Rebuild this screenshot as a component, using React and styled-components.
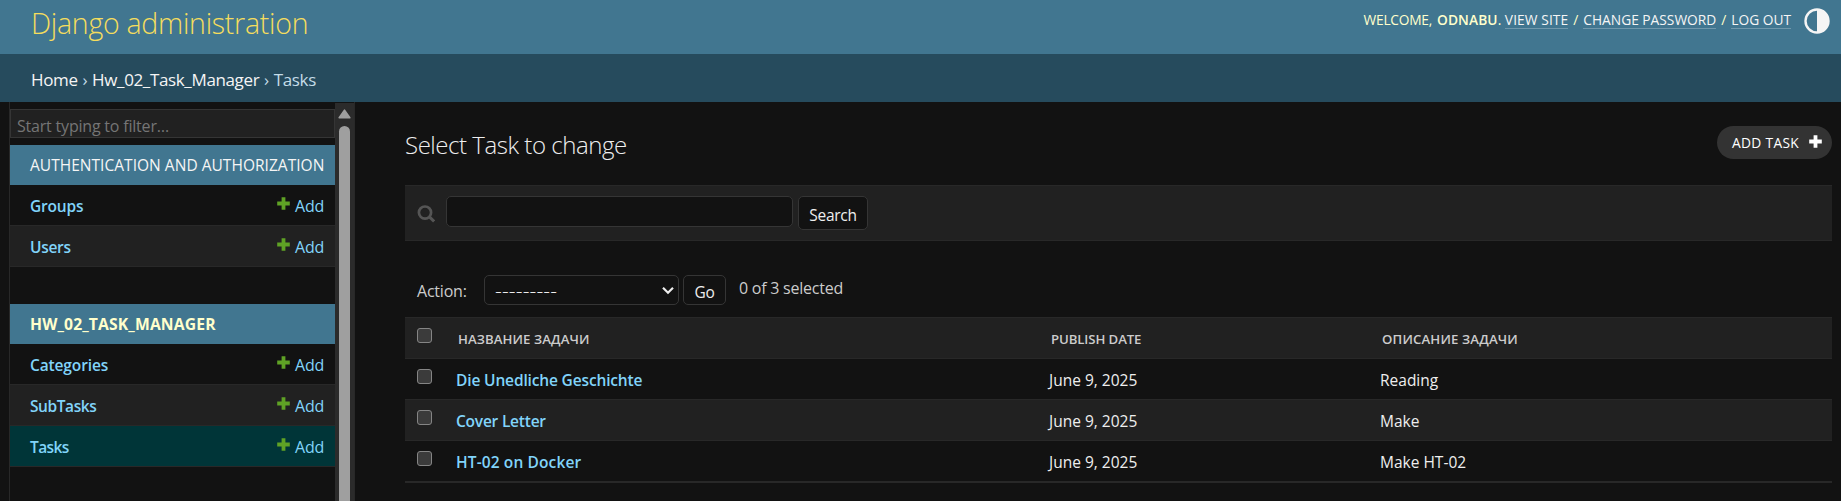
import React from 'react';
import styled, { createGlobalStyle } from 'styled-components';

const GlobalStyle = createGlobalStyle`
  *, *::before, *::after { box-sizing: border-box; }
  html, body { margin: 0; background: #121212; overflow: hidden; }
  body {
    font-family: "Segoe UI", "Open Sans", "Noto Sans", sans-serif;
    font-size: 16px;
    color: #eeeeee;
  }
  a { color: inherit; text-decoration: none; }
  svg { flex: none; }
`;

const Page = styled.div`
  display: flex;
  flex-direction: column;
  height: 501px;
  overflow: hidden;
`;

const Header = styled.header`
  display: flex;
  justify-content: space-between;
  height: 54px;
  flex: none;
  padding: 0 11px 0 31px;
  background: #417690;
  color: #ffffcc;
`;

const Brand = styled.h1`
  margin: 0;
  font-size: 28.5px;
  font-weight: 300;
  line-height: 46px;
  letter-spacing: -0.27px;
  color: #f5dd5d;
`;

const UserTools = styled.div`
  display: flex;
  align-items: flex-start;
  white-space: pre;
  font-size: 13.75px;
  line-height: 20px;
  padding-top: 10px;
`;

const Word = styled.span`
  letter-spacing: ${(p) => p.$track || 0}px;
`;

const UserName = styled.strong`
  margin-left: 5px;
  font-weight: 600;
  letter-spacing: 0.1px;
`;

const ToolLink = styled.a`
  height: 19px;
  border-bottom: 1px solid rgba(255, 255, 255, 0.25);
  color: #f5f5f5;
  letter-spacing: ${(p) => p.$track || 0}px;
`;

const Slash = styled.span`
  width: 15px;
  text-align: center;
`;

const ThemeIcon = styled.svg`
  width: 26px;
  height: 26px;
  margin: -2px 0 0 13px;
`;

const Breadcrumbs = styled.nav`
  flex: none;
  height: 48px;
  padding: 3px 0 0 31px;
  background: #264b5d;
  color: #c4dce8;
  font-size: 17px;
  line-height: 45px;
  letter-spacing: -0.36px;
  word-spacing: 0.8px;
  a { color: #f5f5f5; }
`;

const Body = styled.div`
  flex: 1;
  display: flex;
  min-height: 0;
`;

const Sidebar = styled.aside`
  display: flex;
  flex: none;
  width: 346px;
  margin-left: 9px;
  border-left: 1px solid #282828;
  border-right: 1px solid #282828;
`;

const SideList = styled.div`
  width: 325px;
  flex: none;
  padding-top: 7px;
`;

const FilterInput = styled.input`
  display: block;
  width: 100%;
  height: 29px;
  margin-bottom: 7px;
  padding: 4px 6px 0;
  border: 1px solid #353535;
  background: #212121;
  outline: none;
  font: 400 16px "Segoe UI", "Open Sans", sans-serif;
  letter-spacing: -0.2px;
  &::placeholder { color: #757575; opacity: 1; }
`;

const AppModule = styled.section`
  margin-bottom: 37px;
`;

const Caption = styled.h2`
  height: 40px;
  margin: 0;
  padding-left: 20px;
  background: #417690;
  color: ${(p) => (p.$current ? '#ffffcc' : '#f5f5f5')};
  font-size: ${(p) => (p.$current ? 15.7 : 15.5)}px;
  font-weight: ${(p) => (p.$current ? 700 : 400)};
  line-height: 40px;
  letter-spacing: ${(p) => (p.$current ? 0.14 : 0.03)}px;
  white-space: nowrap;
`;

const ModelRow = styled.div`
  display: flex;
  justify-content: space-between;
  height: 41px;
  padding: 2px 11px 0 20px;
  border-bottom: 1px solid #282828;
  background: ${(p) => (p.$current ? '#003538' : p.$even ? '#212121' : '#121212')};
  color: #81d4fa;
  line-height: 38px;
`;

const ModelLink = styled.a`
  font-size: 15.5px;
  font-weight: 600;
  letter-spacing: ${(p) => p.$track}px;
`;

const AddLink = styled.a`
  display: flex;
  gap: 5px;
  letter-spacing: -0.25px;
  svg { margin-top: 10px; }
`;

const ScrollTrack = styled.div`
  flex: none;
  width: 19px;
  margin-top: 1px;
  padding-top: 6px;
  display: flex;
  flex-direction: column;
  align-items: center;
  gap: 7px;
  overflow: hidden;
  background: #2b2b2b;
`;

const ScrollThumb = styled.div`
  width: 11px;
  height: 420px;
  flex: none;
  border-radius: 6px;
  background: #9f9f9f;
`;

const Main = styled.main`
  flex: 1;
  padding: 0 9px 0 50px;
`;

const TitleRow = styled.div`
  display: flex;
  justify-content: space-between;
  height: 83px;
`;

const Title = styled.h2`
  margin: 27px 0 0;
  font-size: 24px;
  font-weight: 300;
  line-height: 31px;
  letter-spacing: -0.46px;
`;

const AddButton = styled.a`
  display: flex;
  align-items: center;
  justify-content: space-between;
  width: 115px;
  height: 33px;
  margin-top: 24px;
  padding: 0 10px 0 15px;
  border-radius: 17px;
  background: #333333;
  color: #ffffff;
  font-size: 13.75px;
  letter-spacing: 0.32px;
  svg { margin-top: -2px; }
`;

const SearchBar = styled.form`
  display: flex;
  align-items: flex-start;
  height: 56px;
  padding: 10px 12px;
  border: solid #282828;
  border-width: 1px 0;
  background: #212121;
  svg { margin: 9px 11px 0 0; }
`;

const SearchInput = styled.input`
  width: 347px;
  height: 31px;
  border: 1px solid #353535;
  border-radius: 5px;
  background: #121212;
  outline: none;
`;

const Button = styled.button`
  width: ${(p) => p.$width}px;
  height: ${(p) => p.$height}px;
  margin-left: ${(p) => p.$gap}px;
  padding: 3px 0 0;
  border: 1px solid #353535;
  border-radius: 5px;
  background: #121212;
  color: #eeeeee;
  font: 400 15.5px "Segoe UI", "Open Sans", sans-serif;
  letter-spacing: -0.3px;
`;

const Actions = styled.div`
  display: flex;
  height: 76px;
  padding: 34px 0 0 12px;
  color: #cccccc;
  line-height: 30px;
`;

const ActionLabel = styled.label`
  width: 67px;
  padding-top: 1px;
  letter-spacing: -0.22px;
`;

const Select = styled.div`
  display: flex;
  align-items: center;
  justify-content: space-between;
  width: 195px;
  height: 30px;
  padding: 0 4px 0 10px;
  border: 1px solid #353535;
  border-radius: 5px;
  color: #eeeeee;
  font-size: 21px;
  font-weight: 300;
  letter-spacing: 0.15px;
`;

const Counter = styled.span`
  margin: -2px 0 0 13px;
  letter-spacing: -0.24px;
`;

const Results = styled.div`
  border-top: 1px solid #282828;
  border-bottom: 1px solid #282828;
`;

const Row = styled.div`
  display: grid;
  grid-template-columns: 51px 593px 331px 1fr;
  height: 41px;
  border-bottom: 1px solid #282828;
  background: ${(p) => (p.$shade ? '#212121' : '#121212')};
  line-height: 38px;
`;

const Check = styled.input`
  appearance: none;
  width: 15px;
  height: 15px;
  margin: 10px 0 0 12px;
  border: 1px solid #858585;
  border-radius: 3px;
  background: #3b3b3b;
`;

const HeadCell = styled.div`
  padding: 2px 0 0 2px;
  color: #cccccc;
  font-size: 13.2px;
  font-weight: 600;
  letter-spacing: ${(p) => p.$track}px;
`;

const NameCell = styled.a`
  padding-top: 2px;
  color: #81d4fa;
  font-size: 15.5px;
  font-weight: 600;
  letter-spacing: ${(p) => p.$track}px;
`;

const Cell = styled.div`
  padding-top: 2px;
  font-size: 15.5px;
`;

const Plus = ({ color }) => (
  <svg width="13" height="13" viewBox="0 0 13 13" fill={color}>
    <path d="M4.6 0.2h3.8v4.4h4.4v3.8H8.4v4.4H4.6V8.4H0.2V4.6h4.4z" />
  </svg>
);

const modules = [
  {
    name: 'AUTHENTICATION AND AUTHORIZATION',
    models: [{ name: 'Groups', track: -0.2 }, { name: 'Users', track: -0.3 }],
  },
  {
    name: 'HW_02_TASK_MANAGER',
    current: true,
    models: [
      { name: 'Categories', track: -0.13 },
      { name: 'SubTasks', track: -0.42 },
      { name: 'Tasks', track: -0.6, current: true },
    ],
  },
];

const tasks = [
  { name: 'Die Unedliche Geschichte', track: -0.15, date: 'June 9, 2025', text: 'Reading' },
  { name: 'Cover Letter', track: -0.22, date: 'June 9, 2025', text: 'Make' },
  { name: 'HT-02 on Docker', track: 0.12, date: 'June 9, 2025', text: 'Make HT-02' },
];

export default function App() {
  return (
    <Page>
      <GlobalStyle />
      <Header>
        <Brand>Django administration</Brand>
        <UserTools>
          <Word $track={-0.25}>WELCOME,</Word>
          <UserName>ODNABU</UserName>
          <Word>. </Word>
          <ToolLink $track={0.1}>VIEW SITE</ToolLink>
          <Slash>/</Slash>
          <ToolLink>CHANGE PASSWORD</ToolLink>
          <Slash>/</Slash>
          <ToolLink>LOG OUT</ToolLink>
          <ThemeIcon viewBox="0 0 26 26">
            <circle cx="13" cy="13" r="11.5" fill="none" stroke="#f5f5f5" strokeWidth="2.4" />
            <path d="M13 1.5a11.5 11.5 0 0 1 0 23z" fill="#f5f5f5" />
          </ThemeIcon>
        </UserTools>
      </Header>
      <Breadcrumbs>
        <a>Home</a> › <a>Hw_02_Task_Manager</a> › Tasks
      </Breadcrumbs>
      <Body>
        <Sidebar>
          <SideList>
            <FilterInput placeholder="Start typing to filter…" />
            {modules.map((m) => (
              <AppModule key={m.name}>
                <Caption $current={m.current}>{m.name}</Caption>
                {m.models.map((model, i) => (
                  <ModelRow key={model.name} $even={i % 2 === 1} $current={model.current}>
                    <ModelLink $track={model.track}>{model.name}</ModelLink>
                    <AddLink>
                      <Plus color="#5fa225" />
                      Add
                    </AddLink>
                  </ModelRow>
                ))}
              </AppModule>
            ))}
          </SideList>
          <ScrollTrack>
            <svg width="13" height="10" viewBox="0 0 13 10">
              <path d="M6.5 1.2L11.8 8.8H1.2z" fill="#9f9f9f" stroke="#9f9f9f" strokeWidth="1.6" strokeLinejoin="round" />
            </svg>
            <ScrollThumb />
          </ScrollTrack>
        </Sidebar>
        <Main>
          <TitleRow>
            <Title>Select Task to change</Title>
            <AddButton>
              ADD TASK
              <Plus color="#ffffff" />
            </AddButton>
          </TitleRow>
          <SearchBar>
            <svg width="18" height="18" viewBox="0 0 18 18" fill="none" stroke="#555555">
              <circle cx="8" cy="7.6" r="6.1" strokeWidth="2.7" />
              <path d="M12.2 11.7L17.1 16.4" strokeWidth="3" />
            </svg>
            <SearchInput />
            <Button type="button" $width={70} $height={34} $gap={5}>Search</Button>
          </SearchBar>
          <Actions>
            <ActionLabel>Action:</ActionLabel>
            <Select>
              ---------
              <svg width="12" height="9" viewBox="0 0 12 9" fill="none" stroke="#eeeeee" strokeWidth="2.2">
                <path d="M1 1.8l5 5 5-5" />
              </svg>
            </Select>
            <Button type="button" $width={43} $height={30} $gap={4}>Go</Button>
            <Counter>0 of 3 selected</Counter>
          </Actions>
          <Results>
            <Row $shade>
              <Check type="checkbox" />
              <HeadCell $track={0.08}>НАЗВАНИЕ ЗАДАЧИ</HeadCell>
              <HeadCell $track={-0.1}>PUBLISH DATE</HeadCell>
              <HeadCell $track={0.15}>ОПИСАНИЕ ЗАДАЧИ</HeadCell>
            </Row>
            {tasks.map((t, i) => (
              <Row key={t.name} $shade={i % 2 === 1}>
                <Check type="checkbox" />
                <NameCell $track={t.track}>{t.name}</NameCell>
                <Cell>{t.date}</Cell>
                <Cell>{t.text}</Cell>
              </Row>
            ))}
          </Results>
        </Main>
      </Body>
    </Page>
  );
}
